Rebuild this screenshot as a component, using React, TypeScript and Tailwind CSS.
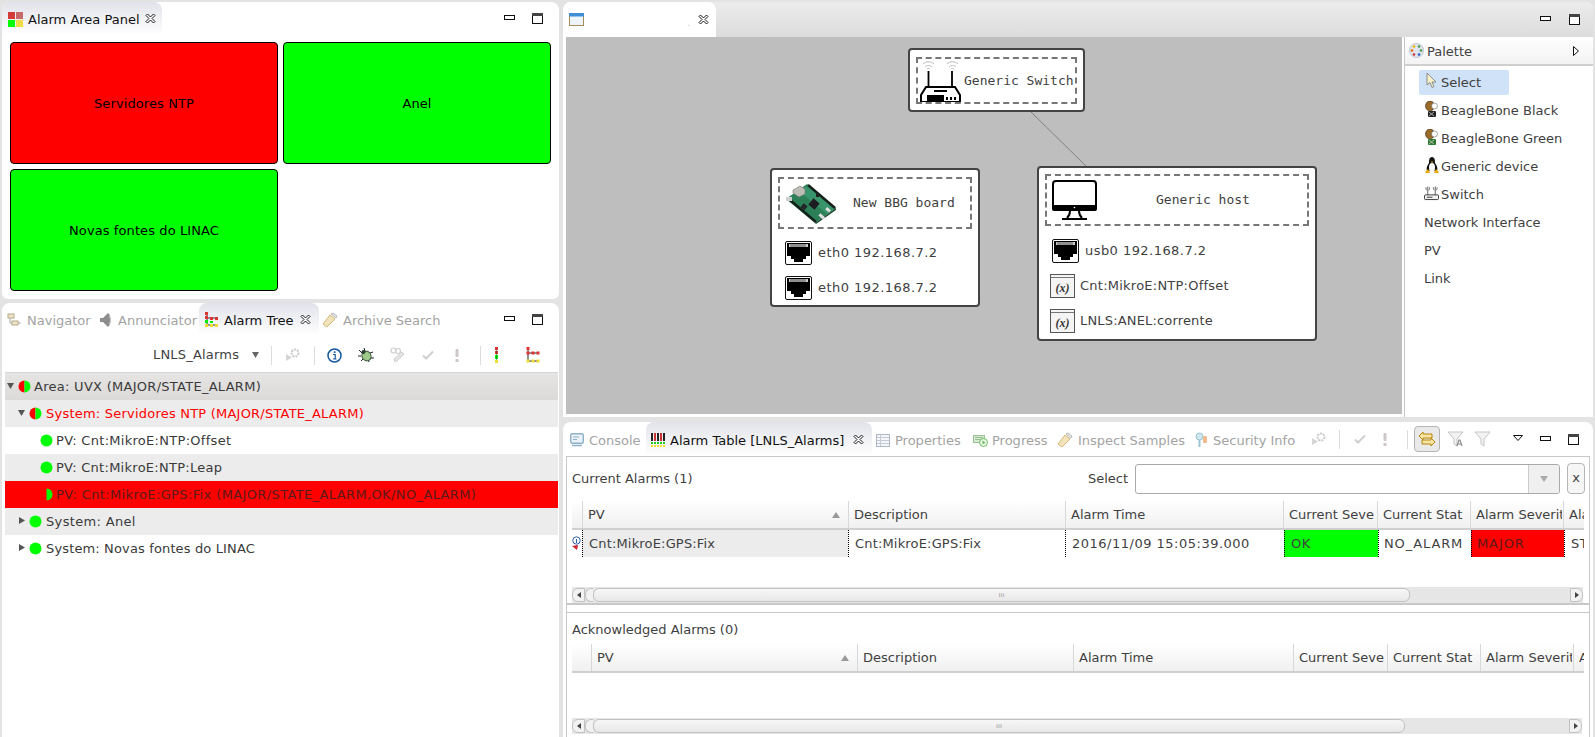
import React from "react";

const Close = () => (
  <svg width="11" height="11" viewBox="0 0 11 11" className="shrink-0">
    <path d="M1 2.500 2.500 1 5.500 4 8.500 1 10 2.500 7 5.500 10 8.500 8.500 10 5.500 7 2.500 10 1 8.500 4 5.500Z" fill="#fff" stroke="#1a1a1a" strokeWidth="1" />
  </svg>
);

const MinBtn = () => (
  <svg width="11" height="5" viewBox="0 0 11 5" className="shrink-0">
    <rect x="0.500" y="0.500" width="10" height="4" fill="#fff" stroke="#111" />
  </svg>
);

const MaxBtn = () => (
  <svg width="11" height="11" viewBox="0 0 11 11" className="shrink-0">
    <rect x="0.500" y="0.500" width="10" height="10" fill="#fff" stroke="#111" />
    <rect x="0" y="0" width="11" height="3" fill="#444" />
  </svg>
);

const MinMax = ({ gap }: { gap: string }) => (
  <div className={`flex items-center ${gap}`}>
    <div className="-mt-[2px]"><MinBtn /></div>
    <MaxBtn />
  </div>
);

const Dot = ({ kind }: { kind: "green" | "split" | "half" }) => (
  <svg width="13" height="13" viewBox="0 0 13 13" className="shrink-0">
    {kind === "green" && <circle cx="6.500" cy="6.500" r="6" fill="#00ff00" />}
    {kind === "split" && (
      <>
        <path d="M6.500 .5a6 6 0 0 0 0 12Z" fill="#ff0000" />
        <path d="M6.500 .5a6 6 0 0 1 0 12Z" fill="#00ff00" />
      </>
    )}
    {kind === "half" && <path d="M6.500 .5a6 6 0 0 1 0 12Z" fill="#00ff00" />}
  </svg>
);

const Twist = ({ open }: { open: boolean }) => (
  <svg width="8" height="8" viewBox="0 0 8 8" className="shrink-0">
    {open ? <path d="M0 1h7L3.500 7Z" fill="#555" /> : <path d="M1 0v7l6-3.500Z" fill="#555" />}
  </svg>
);

const PanelIcon = () => (
  <div className="grid grid-cols-2 gap-[1px] w-[15px] h-[15px] shrink-0">
    <div className="bg-[#d43a3a]" />
    <div className="bg-[#c86868]" />
    <div className="bg-[#00ff00]" />
    <div className="bg-[#eedd44]" />
  </div>
);

const TreeIcon = () => (
  <svg width="14" height="16" viewBox="0 0 14 16" className="shrink-0">
    <path d="M2 2v12M2 6h10M2 13h10" stroke="#333" strokeWidth="1" />
    <rect x="0" y="0" width="3" height="3" fill="#d33" />
    <rect x="0" y="4" width="3" height="3" fill="#d33" />
    <rect x="5" y="5" width="3" height="3" fill="#d33" />
    <rect x="10" y="5" width="3" height="3" fill="#d33" />
    <rect x="0" y="8" width="3" height="3" fill="#0e0" />
    <rect x="5" y="9" width="3" height="2" fill="#0e0" />
    <rect x="0" y="12" width="3" height="3" fill="#ed3" />
    <rect x="5" y="12" width="3" height="3" fill="#ed3" />
    <rect x="10" y="12" width="3" height="3" fill="#ed3" />
  </svg>
);

const NavigatorIcon = () => (
  <svg width="15" height="14" viewBox="0 0 15 14" className="shrink-0">
    <rect x="1" y="1" width="6" height="4" fill="#efe6c8" stroke="#b5a98a" />
    <rect x="5" y="8" width="6" height="4" fill="#efe6c8" stroke="#b5a98a" />
    <path d="M3 5v5h2M11 10h3" stroke="#aaa" fill="none" />
  </svg>
);

const SpeakerIcon = () => (
  <svg width="15" height="16" viewBox="0 0 15 16" className="shrink-0">
    <path d="M1 6h3l5-5c3 2 4 11 0 14l-5-5H1Z" fill="#8d8d8d" />
    <path d="M10 4c2 2 2 6 0 8" stroke="#c4c4c4" fill="none" />
  </svg>
);

const TorchIcon = () => (
  <svg width="16" height="16" viewBox="0 0 16 16" className="shrink-0">
    <path d="M1 12 8 3l5 4-8 8Z" fill="#f1e3bc" stroke="#d6b878" />
    <path d="M9 2l5 4 1-2-4-3Z" fill="#e7e7e7" stroke="#bbb" />
  </svg>
);

const GearRun = () => (
  <svg width="16" height="14" viewBox="0 0 16 14" className="shrink-0">
    <path d="M1 6v7l6-3.500Z" fill="#d5d5d5" />
    <circle cx="10" cy="5" r="3.500" fill="none" stroke="#c8c8c8" strokeWidth="2" strokeDasharray="2 1" />
  </svg>
);

const InfoIcon = () => (
  <svg width="15" height="15" viewBox="0 0 15 15" className="shrink-0">
    <circle cx="7.500" cy="7.500" r="6.500" fill="#fff" stroke="#15579e" strokeWidth="1.500" />
    <path d="M6 6.500h2.200V11H9.500M6 11h3.500" stroke="#15579e" strokeWidth="1.200" fill="none" />
    <rect x="6.800" y="3.300" width="1.700" height="1.700" fill="#15579e" />
  </svg>
);

const BugIcon = () => (
  <svg width="16" height="16" viewBox="0 0 16 16" className="shrink-0">
    <path d="M1 3l3 3M15 5l-3 1M0 9h3M13 11h3M3 14l2-2M11 15l-1-3M6 1l1 3" stroke="#223" strokeWidth="1" />
    <ellipse cx="8.500" cy="9" rx="4.500" ry="5" transform="rotate(-35 8.500 9)" fill="#9fc98b" stroke="#3a5a3a" />
    <circle cx="5.500" cy="5" r="2" fill="#26402e" />
  </svg>
);

const GlassesIcon = () => (
  <svg width="15" height="16" viewBox="0 0 15 16" className="shrink-0">
    <circle cx="3.500" cy="3.500" r="2.500" fill="none" stroke="#cfcfcf" strokeWidth="1.200" />
    <circle cx="8" cy="4" r="2.500" fill="none" stroke="#cfcfcf" strokeWidth="1.200" />
    <path d="M5 15l-1-3 8-7 2 2-7 7Z" fill="#e5e5e5" stroke="#cfcfcf" />
  </svg>
);

const CheckIcon = () => (
  <svg width="12" height="10" viewBox="0 0 12 10" className="shrink-0">
    <path d="M1 5.500 4 8.500 11 1.500" stroke="#cfcfcf" strokeWidth="2" fill="none" />
  </svg>
);

const BangIcon = () => (
  <svg width="4" height="13" viewBox="0 0 4 13" className="shrink-0">
    <rect x="0.500" y="0" width="3" height="8" rx="1" fill="#cfc7c7" />
    <rect x="0.500" y="10" width="3" height="3" fill="#cfc7c7" />
  </svg>
);

const Sep = () => <div className="w-[1px] h-[19px] bg-[#dcdcdc] shrink-0" />;

const LampIcon = () => (
  <svg width="5" height="16" viewBox="0 0 5 16" className="shrink-0">
    <rect x="1" y="0" width="3" height="3" fill="#d33" />
    <rect x="1" y="4" width="3" height="3" fill="#d33" />
    <rect x="1" y="8" width="3" height="4" fill="#0f0" />
    <rect x="1" y="13" width="3" height="3" fill="#ed3" />
    <path d="M2.500 3v10" stroke="#333" strokeWidth="0.500" />
  </svg>
);

const BranchIcon = () => (
  <svg width="14" height="16" viewBox="0 0 14 16" className="shrink-0">
    <path d="M2 2v12M2 6h10M2 14h10" stroke="#222" strokeWidth="1" />
    <rect x="0.500" y="0" width="3" height="3" fill="#d33" />
    <rect x="0.500" y="4.500" width="3" height="3" fill="#d33" />
    <rect x="5.500" y="4.500" width="3" height="3" fill="#d33" />
    <rect x="10.500" y="4.500" width="3" height="3" fill="#d33" />
    <rect x="0.500" y="12.500" width="3" height="3" fill="#ed3" />
    <rect x="5.500" y="12.500" width="3" height="3" fill="#ed3" />
    <rect x="10.500" y="12.500" width="3" height="3" fill="#ed3" />
  </svg>
);

const WindowIcon = () => (
  <svg width="15" height="13" viewBox="0 0 15 13" className="shrink-0">
    <rect x="0.500" y="0.500" width="14" height="12" fill="#eef4fb" stroke="#a58c58" />
    <rect x="0" y="0" width="15" height="3.500" fill="#3f8fd8" />
  </svg>
);

const ConsoleIcon = () => (
  <svg width="14" height="14" viewBox="0 0 14 14" className="shrink-0">
    <rect x="0.700" y="0.700" width="12.600" height="9.600" rx="1.500" fill="#eaf2f8" stroke="#8fb0c8" strokeWidth="1.400" />
    <path d="M3 4h6M3 6.500h4" stroke="#8fb0c8" />
    <path d="M2 12.500h10" stroke="#8fb0c8" strokeWidth="1.500" />
  </svg>
);

const AlarmGridIcon = () => {
  const cols = ["#222", "#c33", "#222", "#c33", "#222"];
  return (
    <svg width="14" height="14" viewBox="0 0 14 14" className="shrink-0">
      {cols.map((c, i) => (
        <g key={i}>
          <rect x={i * 3} y="0" width="2" height="8" fill={c} />
          <rect x={i * 3} y="9" width="2" height="2" fill="#2c2" />
          <rect x={i * 3} y="12" width="2" height="2" fill="#ed3" />
        </g>
      ))}
    </svg>
  );
};

const PropertiesIcon = () => (
  <svg width="14" height="13" viewBox="0 0 14 13" className="shrink-0">
    <rect x="0.500" y="0.500" width="13" height="12" fill="#f4f6f9" stroke="#aeb8c4" />
    <path d="M1 3.500h12M1 6.500h12M1 9.500h12M4.500 1v11" stroke="#c3ccd6" />
  </svg>
);

const ProgressIcon = () => (
  <svg width="15" height="13" viewBox="0 0 15 13" className="shrink-0">
    <rect x="0.500" y="1.500" width="11" height="7" fill="#d8ead4" stroke="#9bbf95" />
    <path d="M2 3.500h8M2 5.500h6" stroke="#9bbf95" />
    <circle cx="10.500" cy="8.500" r="4" fill="#e9f6e3" stroke="#6fbd63" />
    <path d="M9.500 6.500v4l3-2Z" fill="#6fbd63" />
  </svg>
);

const KeyIcon = () => (
  <svg width="13" height="16" viewBox="0 0 13 16" className="shrink-0">
    <circle cx="4.500" cy="4.500" r="3.500" fill="#cfe7ef" stroke="#9cc4d2" />
    <path d="M4.500 8v7" stroke="#9cc4d2" strokeWidth="2" />
    <rect x="8" y="4" width="4" height="7" rx="1" fill="#f2b98c" />
  </svg>
);

const ToggleIcon = () => (
  <svg width="18" height="16" viewBox="0 0 18 16" className="shrink-0">
    <path d="M1 5l4-4v2h9v4H5v2Z" fill="#f6e6a6" stroke="#b8860b" />
    <path d="M17 11l-4 4v-2H4V9h9V7Z" fill="#f6e6a6" stroke="#b8860b" />
  </svg>
);

const FunnelIcon = ({ letter }: { letter?: boolean }) => (
  <svg width="17" height="16" viewBox="0 0 17 16" className="shrink-0">
    <path d="M1 1h15l-6 7v7l-3-2V8Z" fill="#f2f2f2" stroke="#c5c5c5" />
    {letter && <path d="M10 15l2-6h1l2 6M11 13h3" stroke="#8a8a8a" strokeWidth="1.200" fill="none" />}
  </svg>
);

const PaletteIcon = () => (
  <svg width="15" height="15" viewBox="0 0 15 15" className="shrink-0">
    <circle cx="7.500" cy="7.500" r="7" fill="#dfe4ee" stroke="#c0c6d4" />
    <circle cx="5" cy="3.500" r="1.300" fill="#f2b705" />
    <circle cx="10" cy="3.500" r="1.300" fill="#43a047" />
    <circle cx="3" cy="7.500" r="1.300" fill="#ef6c00" />
    <circle cx="12" cy="7.500" r="1.300" fill="#43a047" />
    <circle cx="5" cy="11.500" r="1.300" fill="#d32f2f" />
    <circle cx="10" cy="11.500" r="1.300" fill="#1e5fd0" />
  </svg>
);

const ArrowIcon = () => (
  <svg width="11" height="16" viewBox="0 0 11 16" className="shrink-0">
    <path d="M1 0v12l3-2.500 2 5 2-1-2-4.500h4Z" fill="#f7f0c8" stroke="#777" strokeWidth="0.800" />
  </svg>
);

const BeagleIcon = ({ chest }: { chest: string }) => (
  <svg width="13" height="16" viewBox="0 0 13 16" className="shrink-0">
    <ellipse cx="5" cy="5" rx="4.500" ry="5" fill="#9a6a2a" stroke="#3d2a10" strokeWidth="0.600" />
    <ellipse cx="9.500" cy="5" rx="3" ry="3" fill="#fff" stroke="#555" strokeWidth="0.500" />
    <rect x="3" y="10" width="8" height="6" rx="1" fill={chest} />
    <path d="M4 11l5 4M9 11l-5 4" stroke="#ddd" strokeWidth="0.700" />
  </svg>
);

const TuxIcon = () => (
  <svg width="14" height="17" viewBox="0 0 14 17" className="shrink-0">
    <path d="M7 0C4 0 4 4 4 6 2 9 1 11 2 14h10c1-3 0-5-2-8 0-2 0-6-3-6Z" fill="#111" />
    <ellipse cx="7" cy="10.500" rx="3" ry="4.500" fill="#fff" />
    <path d="M5.500 4.500h3L7 6Z" fill="#eba800" />
    <path d="M0 15l3-3 2 4H1ZM14 15l-3-3-2 4h4Z" fill="#eba800" />
  </svg>
);

const SwitchSmallIcon = () => (
  <svg width="15" height="16" viewBox="0 0 16 16" className="shrink-0">
    <path d="M4 1v9M12 1v9M2 2c0 1 0 2 1 3M6 2c0 1 0 2-1 3M10 2c0 1 0 2 1 3M14 2c0 1 0 2-1 3" stroke="#333" strokeWidth="0.800" fill="none" />
    <rect x="0.500" y="10" width="15" height="5" rx="1" fill="#f4f4f4" stroke="#333" />
    <path d="M3 12.500h6" stroke="#333" />
  </svg>
);

const RouterArt = () => (
  <svg width="41" height="44" viewBox="0 0 41 44" className="shrink-0">
    <g stroke="#bbb" strokeWidth="1" fill="none">
      <path d="M3 5c3-3 8-3 11 0M5 8c2-2 5-2 7 0M7 10c1-1 2-1 3 0" />
      <path d="M27 5c3-3 8-3 11 0M29 8c2-2 5-2 7 0M31 10c1-1 2-1 3 0" />
    </g>
    <path d="M8.500 12v17M32 12v17" stroke="#000" strokeWidth="1.800" />
    <path d="M6 28h29l5 8v7H1v-7Z" fill="#fff" stroke="#000" strokeWidth="2" />
    <rect x="14" y="31" width="13" height="2" fill="#000" />
    <rect x="7" y="36" width="17" height="6" fill="#000" />
    <rect x="26" y="38" width="2" height="3" fill="#000" />
    <rect x="30" y="38" width="2" height="3" fill="#000" />
    <rect x="34" y="38" width="2" height="3" fill="#000" />
  </svg>
);

const MonitorArt = () => (
  <svg width="45" height="40" viewBox="0 0 45 40" className="shrink-0">
    <rect x="1" y="1" width="43" height="29" rx="3" fill="#fff" stroke="#000" strokeWidth="2" />
    <rect x="0" y="23" width="45" height="8" rx="2" fill="#000" />
    <rect x="2" y="23" width="41" height="2" fill="#fff" />
    <circle cx="22.500" cy="27.500" r="0.800" fill="#fff" />
    <path d="M18 31c0 3-1 5-3 7M27 31c0 3 1 5 3 7" stroke="#000" strokeWidth="2" fill="none" />
    <path d="M10 39h25" stroke="#000" strokeWidth="2" />
  </svg>
);

const BoardArt = () => (
  <svg width="52" height="42" viewBox="0 0 52 42" className="shrink-0">
    <path d="M1 17 22 2l29 24-21 15Z" fill="#2c8058" />
    <path d="M14 9 23 3l27 23-8 6Z" fill="#38946a" />
    <path d="M23 3l27 23" stroke="#15201b" strokeWidth="2.500" />
    <path d="M5 18l26 22" stroke="#15201b" strokeWidth="2.500" />
    <path d="M30 41l21-15v2L31 42Z" fill="#1a4a34" />
    <rect x="25" y="18" width="8" height="8" transform="rotate(40 29 22)" fill="#1c1c22" />
    <rect x="17" y="22" width="5" height="5" transform="rotate(40 19 24)" fill="#25252c" />
    <rect x="31" y="12" width="3" height="3" fill="#222" />
    <path d="M8 8l7-4 5 3v5l-6 3-6-4Z" fill="#bdbdb6" stroke="#777" strokeWidth="0.600" />
    <rect x="1" y="15" width="6" height="4" fill="#d0d0d0" />
    <rect x="41" y="26" width="5" height="3" transform="rotate(40 43 27)" fill="#e0e0e0" />
    <rect x="34" y="33" width="6" height="3" transform="rotate(40 37 34)" fill="#e0e0e0" />
  </svg>
);

const Rj45 = () => (
  <svg width="27" height="24" viewBox="0 0 27 24" className="shrink-0">
    <rect x="0.500" y="0.500" width="26" height="23" rx="1.500" fill="#fff" stroke="#111" />
    <path d="M2 2h23v13h-4v3h-3v3H9v-3H6v-3H2Z" fill="#000" />
    <rect x="4" y="3" width="19" height="3" fill="#ccc" />
    <path d="M6 3v3M8 3v3M10 3v3M12 3v3M14 3v3M16 3v3M18 3v3M20 3v3" stroke="#333" strokeWidth="0.800" />
  </svg>
);

const VarIcon = () => (
  <div className="w-[25px] h-[24px] border border-[#555] bg-[#f4f4f4] flex flex-col shrink-0">
    <div className="h-[3px] border-b border-[#777]" />
    <div className="flex-1 flex items-center justify-center font-['Liberation_Serif',serif] italic font-bold text-[12px] text-[#333]">(x)</div>
  </div>
);

const Tab = ({ icon, label, className }: { icon: React.ReactNode; label: string; className: string }) => (
  <div className={`flex items-center gap-[5px] text-[#a3a3a3] shrink-0 ${className}`}>
    <div className="mt-[2px]">{icon}</div>
    <span className="mt-[3px]">{label}</span>
  </div>
);

const ActiveTab = ({ icon, label, className }: { icon: React.ReactNode; label: string; className: string }) => (
  <div className={`flex items-center gap-[5px] pl-[5px] text-[#111] rounded-t-[8px] bg-gradient-to-b from-[#e2e3ea] to-white shrink-0 ${className}`}>
    <div className="mt-[2px]">{icon}</div>
    <span className="mt-[3px] whitespace-nowrap">{label}</span>
    <div className="ml-auto mr-[8px]"><Close /></div>
  </div>
);

const treeRows = [
  { label: "Area: UVX (MAJOR/STATE_ALARM)", dot: "split", twist: "open", pad: "pl-[2px]", gap: "ml-[3px]", track: "tracking-[0.28px]", bg: "bg-gradient-to-b from-[#e6e5e3] to-[#dcdad8]", text: "text-[#3a3a3a]" },
  { label: "System: Servidores NTP (MAJOR/STATE_ALARM)", dot: "split", twist: "open", pad: "pl-[13px]", gap: "ml-[4px]", track: "tracking-[0.22px]", bg: "bg-[#ececec]", text: "text-[#ff0000]" },
  { label: "PV: Cnt:MikroE:NTP:Offset", dot: "green", pad: "pl-[35px]", gap: "ml-[3px]", track: "tracking-[0.29px]", bg: "bg-white", text: "text-[#3a3a3a]" },
  { label: "PV: Cnt:MikroE:NTP:Leap", dot: "green", pad: "pl-[35px]", gap: "ml-[3px]", track: "tracking-[0.27px]", bg: "bg-[#ececec]", text: "text-[#3a3a3a]" },
  { label: "PV: Cnt:MikroE:GPS:Fix (MAJOR/STATE_ALARM,OK/NO_ALARM)", dot: "half", pad: "pl-[35px]", gap: "ml-[3px]", track: "tracking-[0.38px]", bg: "bg-[#ff0000]", text: "text-[#5a1a1a]" },
  { label: "System: Anel", dot: "green", twist: "closed", pad: "pl-[13px]", gap: "ml-[4px]", track: "tracking-[0.34px]", bg: "bg-[#ececec]", text: "text-[#3a3a3a]" },
  { label: "System: Novas fontes do LINAC", dot: "green", twist: "closed", pad: "pl-[13px]", gap: "ml-[4px]", track: "tracking-[0.14px]", bg: "bg-white", text: "text-[#3a3a3a]" },
];

const palette = [
  { label: "Select", icon: <ArrowIcon /> },
  { label: "BeagleBone Black", icon: <BeagleIcon chest="#222" /> },
  { label: "BeagleBone Green", icon: <BeagleIcon chest="#2d7a2d" /> },
  { label: "Generic device", icon: <TuxIcon /> },
  { label: "Switch", icon: <SwitchSmallIcon /> },
];

const Scrollbar = ({ thumb, className }: { thumb: string; className: string }) => (
  <div className={`flex items-center h-[16px] bg-[#e6e6e6] ${className}`}>
    <div className="w-[13px] h-[14px] border border-[#c2c2c2] rounded-l-[6px] flex items-center justify-center bg-[#f2f2f2] shrink-0">
      <svg width="4" height="6" viewBox="0 0 4 6"><path d="M4 0v6L0 3Z" fill="#444" /></svg>
    </div>
    <div className="w-[8px] h-[14px] border-y border-l border-[#c2c2c2] rounded-l-[6px] bg-[#f2f2f2] shrink-0" />
    <div className={`h-[14px] border border-[#c2c2c2] rounded-[6px] bg-gradient-to-b from-[#f7f7f7] to-[#e8e8e8] flex items-center justify-center text-[7px] text-[#999] shrink-0 ${thumb}`}>
      ııı
    </div>
    <div className="flex-1" />
    <div className="w-[13px] h-[14px] border border-[#c2c2c2] rounded-r-[6px] flex items-center justify-center bg-[#f2f2f2] shrink-0">
      <svg width="4" height="6" viewBox="0 0 4 6"><path d="M0 0v6l4-3Z" fill="#444" /></svg>
    </div>
  </div>
);

const HeadCell = ({ label, width, sort }: { label?: string; width: string; sort?: boolean }) => (
  <div className={`h-full border-r border-[#d8d8d8] pl-[5px] pr-[1px] flex items-center shrink-0 ${width}`}>
    <span className="flex-1 overflow-hidden whitespace-nowrap">{label}</span>
    {sort && (
      <svg width="8" height="6" viewBox="0 0 8 6" className="shrink-0 mr-[7px]"><path d="M0 6h8L4 0Z" fill="#999" /></svg>
    )}
  </div>
);

const Header = ({ widths, last }: { widths: string[]; last: string }) => (
  <div className="flex h-[29px] border-b-2 border-[#cfcfcf] bg-gradient-to-b from-white to-[#f0f0f0] overflow-hidden">
    <HeadCell width={widths[0]} />
    <HeadCell width={widths[1]} label="PV" sort />
    <HeadCell width={widths[2]} label="Description" />
    <HeadCell width={widths[3]} label="Alarm Time" />
    <HeadCell width={widths[4]} label="Current Seve" />
    <HeadCell width={widths[5]} label="Current Stat" />
    <HeadCell width={widths[6]} label="Alarm Severit" />
    <HeadCell width={widths[7]} label={last} />
  </div>
);

const currentWidths = ["w-[11px]", "w-[266px]", "w-[217px]", "w-[218px]", "w-[94px]", "w-[93px]", "w-[93px]", "w-[24px]"];
const ackWidths = ["w-[20px]", "w-[266px]", "w-[216px]", "w-[220px]", "w-[94px]", "w-[93px]", "w-[93px]", "w-[12px]"];

const Cell = ({ width, bg, text, cls }: { width: string; bg?: string; text: string; cls?: string }) => (
  <div className={`h-full border-l border-dotted border-black pl-[6px] flex items-center overflow-hidden whitespace-nowrap shrink-0 ${width} ${bg ?? ""} ${cls ?? ""}`}>
    {text}
  </div>
);

export default function App() {
  return (
    <div className="w-[1595px] h-[737px] bg-[#e3e3e3] flex overflow-hidden font-['DejaVu_Sans',sans-serif] text-[13px] text-[#3f3f3f]">
      <div className="w-[557px] ml-[2px] mr-[4px] pt-[2px] flex flex-col gap-[4px] shrink-0">
        <section className="h-[297px] bg-white rounded-t-[8px] rounded-b-[6px] flex flex-col shrink-0">
          <div className="h-[33px] flex items-center pr-[16px] shrink-0">
            <ActiveTab className="w-[160px] h-[33px]" icon={<div className="ml-[1px]"><PanelIcon /></div>} label="Alarm Area Panel" />
            <div className="ml-auto"><MinMax gap="gap-[17px]" /></div>
          </div>
          <div className="grid grid-cols-[268px_268px] grid-rows-[122px_122px] gap-[5px] pl-[8px] pt-[7px] text-black tracking-[0.1px]">
            <div className="bg-[#ff0000] border border-black rounded-[4px] flex items-center justify-center pt-[1px]">Servidores NTP</div>
            <div className="bg-[#00ff00] border border-black rounded-[4px] flex items-center justify-center pt-[1px]">Anel</div>
            <div className="bg-[#00ff00] border border-black rounded-[4px] flex items-center justify-center pt-[1px]">Novas fontes do LINAC</div>
          </div>
        </section>

        <section className="flex-1 bg-white rounded-t-[8px] flex flex-col">
          <div className="h-[32px] flex items-center pl-[5px] pr-[16px] shrink-0">
            <Tab className="w-[92px]" icon={<NavigatorIcon />} label="Navigator" />
            <Tab className="w-[100px] !gap-[4px]" icon={<SpeakerIcon />} label="Annunciator" />
            <ActiveTab className="w-[120px] h-[32px] !pl-[6px]" icon={<TreeIcon />} label="Alarm Tree" />
            <Tab className="ml-[3px]" icon={<TorchIcon />} label="Archive Search" />
            <div className="ml-auto"><MinMax gap="gap-[17px]" /></div>
          </div>
          <div className="h-[34px] flex items-center pl-[151px] mt-[3px] shrink-0">
            <span className="tracking-[0.2px]">LNLS_Alarms</span>
            <svg width="7" height="6" viewBox="0 0 7 6" className="ml-[13px] shrink-0"><path d="M0 0h7L3.500 6Z" fill="#666" /></svg>
            <div className="ml-[12px]"><Sep /></div>
            <div className="ml-[13px]"><GearRun /></div>
            <div className="ml-[13px]"><Sep /></div>
            <div className="ml-[12px]"><InfoIcon /></div>
            <div className="ml-[16px]"><BugIcon /></div>
            <div className="ml-[16px]"><GlassesIcon /></div>
            <div className="ml-[17px]"><CheckIcon /></div>
            <div className="ml-[21px]"><BangIcon /></div>
            <div className="ml-[21px]"><Sep /></div>
            <div className="ml-[13px]"><LampIcon /></div>
            <div className="ml-[27px]"><BranchIcon /></div>
          </div>
          <div className="ml-[3px] mr-[1px] border-t border-[#d5d5d5]">
            {treeRows.map((row) => (
              <div key={row.label} className={`h-[27px] flex items-center ${row.pad} ${row.bg} ${row.text}`}>
                {row.twist ? (
                  <div className="-mt-[2px]"><Twist open={row.twist === "open"} /></div>
                ) : null}
                <div className={`-mt-[1px] ${row.twist ? "ml-[3px]" : ""}`}>
                  <Dot kind={row.dot as "green" | "split" | "half"} />
                </div>
                <span className={`whitespace-nowrap ${row.gap} ${row.track}`}>{row.label}</span>
              </div>
            ))}
          </div>
        </section>
      </div>

      <div className="w-[1030px] pt-[2px] flex flex-col gap-[5px] shrink-0">
        <section className="h-[415px] bg-white rounded-t-[8px] flex flex-col shrink-0">
          <div className="h-[35px] flex items-center rounded-t-[8px] bg-gradient-to-b from-[#ececec] to-[#dcdcdc] shrink-0 pr-[13px]">
            <div className="w-[153px] h-[35px] bg-white rounded-t-[8px] flex items-center pl-[6px] pr-[7px] shrink-0">
              <WindowIcon />
              <span className="ml-auto mr-[8px] mt-[8px] text-[#bbb] text-[8px]">.</span>
              <Close />
            </div>
            <div className="ml-auto"><MinMax gap="gap-[18px]" /></div>
          </div>
          <div className="flex flex-1 min-h-0 pl-[3px]">
            <div className="relative w-[836px] h-[377px] bg-[#bebebe] shrink-0">
              <svg width="120" height="70" viewBox="0 0 120 70" className="absolute left-[460px] top-[70px]">
                <path d="M5 5 60 59" stroke="#666" strokeWidth="0.700" />
              </svg>
              <div className="absolute left-[342px] top-[11px] w-[177px] h-[64px] bg-white border-2 border-[#444] rounded-[4px] pt-[7px] px-[6px]">
                <div className="h-[47px] border-2 border-dashed border-[#777] flex items-center pl-[2px] font-['DejaVu_Sans_Mono',monospace] whitespace-nowrap overflow-hidden">
                  <RouterArt />
                  <span className="ml-[3px]">Generic Switch</span>
                </div>
              </div>
              <div className="absolute left-[204px] top-[131px] w-[210px] h-[139px] bg-white border-2 border-[#444] rounded-[4px] pt-[7px] px-[6px]">
                <div className="h-[52px] border-2 border-dashed border-[#777] flex items-center pl-[5px] font-['DejaVu_Sans_Mono',monospace]">
                  <BoardArt />
                  <span className="ml-[16px]">New BBG board</span>
                </div>
                <div className="mt-[12px] flex items-center pl-[7px]"><Rj45 /><span className="ml-[6px] tracking-[0.45px]">eth0 192.168.7.2</span></div>
                <div className="mt-[11px] flex items-center pl-[7px]"><Rj45 /><span className="ml-[6px] tracking-[0.45px]">eth0 192.168.7.2</span></div>
              </div>
              <div className="absolute left-[471px] top-[129px] w-[280px] h-[175px] bg-white border-2 border-[#444] rounded-[4px] pt-[6px] px-[6px]">
                <div className="h-[52px] border-2 border-dashed border-[#777] flex items-center pl-[5px] font-['DejaVu_Sans_Mono',monospace]">
                  <MonitorArt />
                  <span className="ml-[59px]">Generic host</span>
                </div>
                <div className="mt-[13px] flex items-center pl-[7px]"><Rj45 /><span className="ml-[6px] tracking-[0.45px]">usb0 192.168.7.2</span></div>
                <div className="mt-[11px] flex items-center pl-[5px]"><VarIcon /><span className="ml-[5px] tracking-[0.24px]">Cnt:MikroE:NTP:Offset</span></div>
                <div className="mt-[11px] flex items-center pl-[5px]"><VarIcon /><span className="ml-[5px] tracking-[0.17px]">LNLS:ANEL:corrente</span></div>
              </div>
            </div>
            <div className="flex-1 ml-[2px] border-l border-[#c8c8c8]">
              <div className="h-[29px] flex items-center pl-[4px] pr-[14px] border-b-2 border-[#cfcfcf] bg-gradient-to-b from-white to-[#f3f3f3]">
                <PaletteIcon />
                <span className="ml-[3px] mt-[3px]">Palette</span>
                <svg width="6" height="10" viewBox="0 0 6 10" className="ml-auto"><path d="M.5.5v9L5.500 5Z" fill="#fff" stroke="#111" /></svg>
              </div>
              <div className="flex flex-col pt-[4px]">
                {palette.map((item, i) => (
                  <div key={item.label} className={`h-[25px] mb-[3px] ml-[14px] w-[90px] pl-[5px] flex items-center gap-[2px] rounded-[2px] whitespace-nowrap ${i === 0 ? "bg-[#cfe2f8]" : ""}`}>
                    <div className="w-[15px] shrink-0 flex justify-center"><span className="-mt-[3px] block">{item.icon}</span></div>
                    <span>{item.label}</span>
                  </div>
                ))}
                {["Network Interface", "PV", "Link"].map((label) => (
                  <div key={label} className="h-[25px] mb-[3px] pl-[19px] flex items-center">{label}</div>
                ))}
              </div>
            </div>
          </div>
        </section>

        <section className="flex-1 bg-white rounded-t-[8px] flex flex-col min-h-0">
          <div className="h-[34px] flex items-center pl-[7px] shrink-0">
            <Tab className="w-[76px]" icon={<ConsoleIcon />} label="Console" />
            <ActiveTab className="w-[226px] h-[34px]" icon={<AlarmGridIcon />} label="Alarm Table [LNLS_Alarms]" />
            <Tab className="ml-[4px] w-[97px]" icon={<PropertiesIcon />} label="Properties" />
            <Tab className="w-[84px] !gap-[4px]" icon={<ProgressIcon />} label="Progress" />
            <Tab className="w-[138px]" icon={<TorchIcon />} label="Inspect Samples" />
            <Tab className="w-[116px]" icon={<KeyIcon />} label="Security Info" />
            <GearRun />
            <div className="ml-[12px]"><Sep /></div>
            <div className="ml-[14px]"><CheckIcon /></div>
            <div className="ml-[17px]"><BangIcon /></div>
            <div className="ml-[20px]"><Sep /></div>
            <div className="ml-[6px] w-[26px] h-[26px] border border-[#b5b5b5] rounded-[4px] bg-[#e9e9e9] flex items-center justify-center"><ToggleIcon /></div>
            <div className="ml-[7px]"><FunnelIcon letter /></div>
            <div className="ml-[10px]"><FunnelIcon /></div>
            <svg width="10" height="6" viewBox="0 0 10 6" className="ml-[22px] -mt-[3px]"><path d="M.5.5h9L5 5.500Z" fill="#fff" stroke="#111" /></svg>
            <div className="ml-[17px]"><MinMax gap="gap-[17px]" /></div>
          </div>

          <div className="mx-[3px] border-x border-t border-[#c8c8c8] flex flex-col flex-1 min-h-0">
            <div className="h-[148px] border-b-2 border-[#c8c8c8] px-[5px] flex flex-col shrink-0">
              <div className="h-[44px] flex items-center shrink-0">
                <span className="-mt-[1px]">Current Alarms (1)</span>
                <span className="ml-auto -mt-[1px]">Select</span>
                <div className="ml-[7px] w-[425px] h-[30px] border border-[#aaa] rounded-[3px] flex bg-white">
                  <div className="ml-auto w-[31px] border-l border-[#ccc] bg-[#f0f0f0] flex items-center justify-center rounded-r-[3px]">
                    <svg width="8" height="6" viewBox="0 0 8 6"><path d="M0 0h8L4 6Z" fill="#aaa" /></svg>
                  </div>
                </div>
                <div className="ml-[7px] -mr-[1px] w-[18px] h-[31px] border border-[#b5b5b5] rounded-[4px] flex items-center justify-center bg-[#f6f6f6] -mt-[2px]">x</div>
              </div>
              <Header widths={currentWidths} last="Ala" />
              <div className="flex h-[27px] overflow-hidden">
                <div className="w-[10px] shrink-0 flex items-center">
                  <svg width="9" height="14" viewBox="0 0 9 14" className="-mt-[2px]">
                    <path d="M0 10l6-1-1 5Z" fill="#d02030" />
                    <circle cx="4.500" cy="4.500" r="3.700" fill="#fff" stroke="#2a5fb0" />
                    <path d="M4.500 3v4" stroke="#2a5fb0" />
                  </svg>
                </div>
                <Cell width="w-[266px]" bg="bg-[#ececec]" cls="tracking-[0.17px]" text="Cnt:MikroE:GPS:Fix" />
                <Cell width="w-[217px]" cls="tracking-[0.17px]" text="Cnt:MikroE:GPS:Fix" />
                <Cell width="w-[219px]" cls="tracking-[0.5px]" text="2016/11/09 15:05:39.000" />
                <Cell width="w-[94px]" bg="bg-[#00ff00]" cls="tracking-[0.5px]" text="OK" />
                <Cell width="w-[93px]" cls="tracking-[0.9px] !pl-[5px]" text="NO_ALARM" />
                <Cell width="w-[93px]" bg="bg-[#ff0000]" cls="text-[#5a1a1a] tracking-[0.9px] !pl-[5px]" text="MAJOR" />
                <Cell width="w-[24px]" cls="tracking-[0.5px]" text="ST" />
              </div>
              <div className="flex-1" />
              <Scrollbar className="mr-[1px]" thumb="w-[817px]" />
            </div>

            <div className="mt-[7px] border-t border-[#c8c8c8] px-[5px] flex flex-col flex-1 min-h-0 pb-[3px]">
              <div className="h-[31px] flex items-center shrink-0 pt-[3px]">Acknowledged Alarms (0)</div>
              <Header widths={ackWidths} last="A" />
              <div className="flex-1" />
              <Scrollbar className="mr-[2px]" thumb="w-[812px]" />
            </div>
          </div>
        </section>
      </div>
    </div>
  );
}
